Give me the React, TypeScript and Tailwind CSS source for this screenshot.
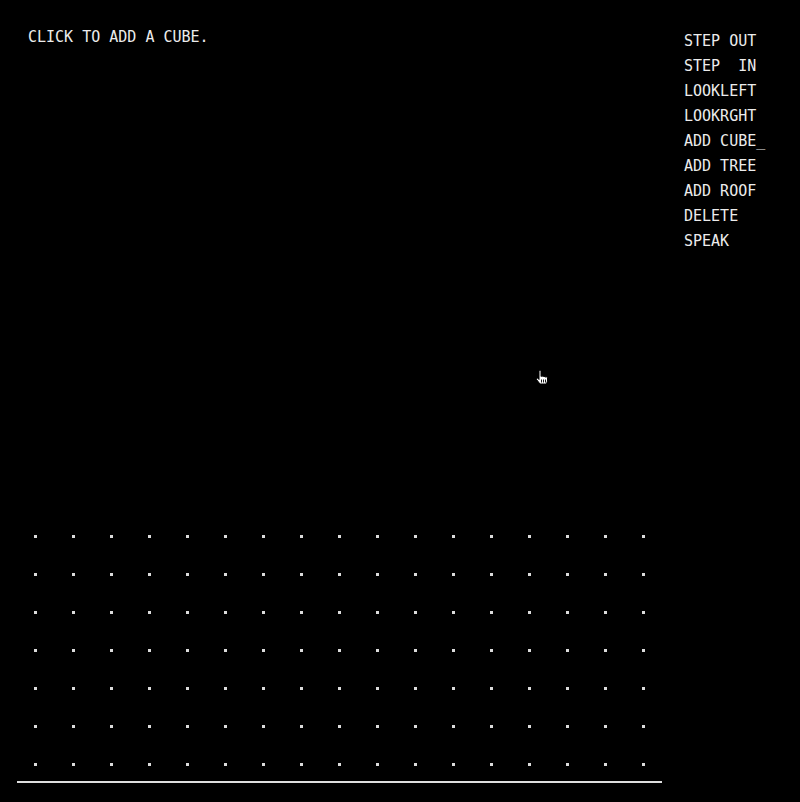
import React from "react";

const menu = ["STEP OUT", "STEP  IN", "LOOKLEFT", "LOOKRGHT", "ADD CUBE_", "ADD TREE", "ADD ROOF", "DELETE", "SPEAK"];

function HandCursor() {
  return (
    <svg width="16" height="17" viewBox="-1 -1 16 17" className="absolute left-[534px] top-[369px]">
      <path
        d="M4 1.5 Q5 -0.5 6 1.5 V6.5 Q7 5 8 6.5 Q9 5.5 10 7 Q11.5 6.5 12.5 7.5 V11 L11.5 14 H5 L1.5 9.5 Q1 7.5 2.5 8 L4 9.5 Z"
        fill="#ffffff"
        stroke="#000000"
        strokeWidth="1"
        strokeLinejoin="round"
      />
      <path d="M6.5 9.5 v3 M8.5 9.5 v3 M10.5 9.5 v3" stroke="#000000" strokeWidth="0.9" />
    </svg>
  );
}

export default function App() {
  const dots = Array.from({ length: 7 * 17 });
  return (
    <div
      className="relative flex h-[802px] w-[800px] flex-col bg-black text-[15px] leading-[25px] text-[#ececec]"
      style={{ fontFamily: '"DejaVu Sans Mono", "Liberation Mono", monospace' }}
    >
      <div className="flex items-start justify-between">
        <div className="pl-[28px] pt-[25px] whitespace-pre">CLICK TO ADD A CUBE.</div>
        <div className="flex w-[116px] flex-col pt-[29px]">
          {menu.map((m) => (
            <div key={m} className="whitespace-pre">
              {m}
            </div>
          ))}
        </div>
      </div>
      <div className="flex-1" />
      <div className="ml-[34px] grid w-fit grid-cols-[repeat(17,3px)] gap-x-[35px] gap-y-[35px]">
        {dots.map((_, i) => (
          <div key={i} className="h-[3px] w-[3px] bg-[#dcdcdc]" />
        ))}
      </div>
      <div className="mb-[19px] ml-[17px] mt-[15px] h-[2px] w-[645px] bg-[#dedede]" />
      <HandCursor />
    </div>
  );
}
